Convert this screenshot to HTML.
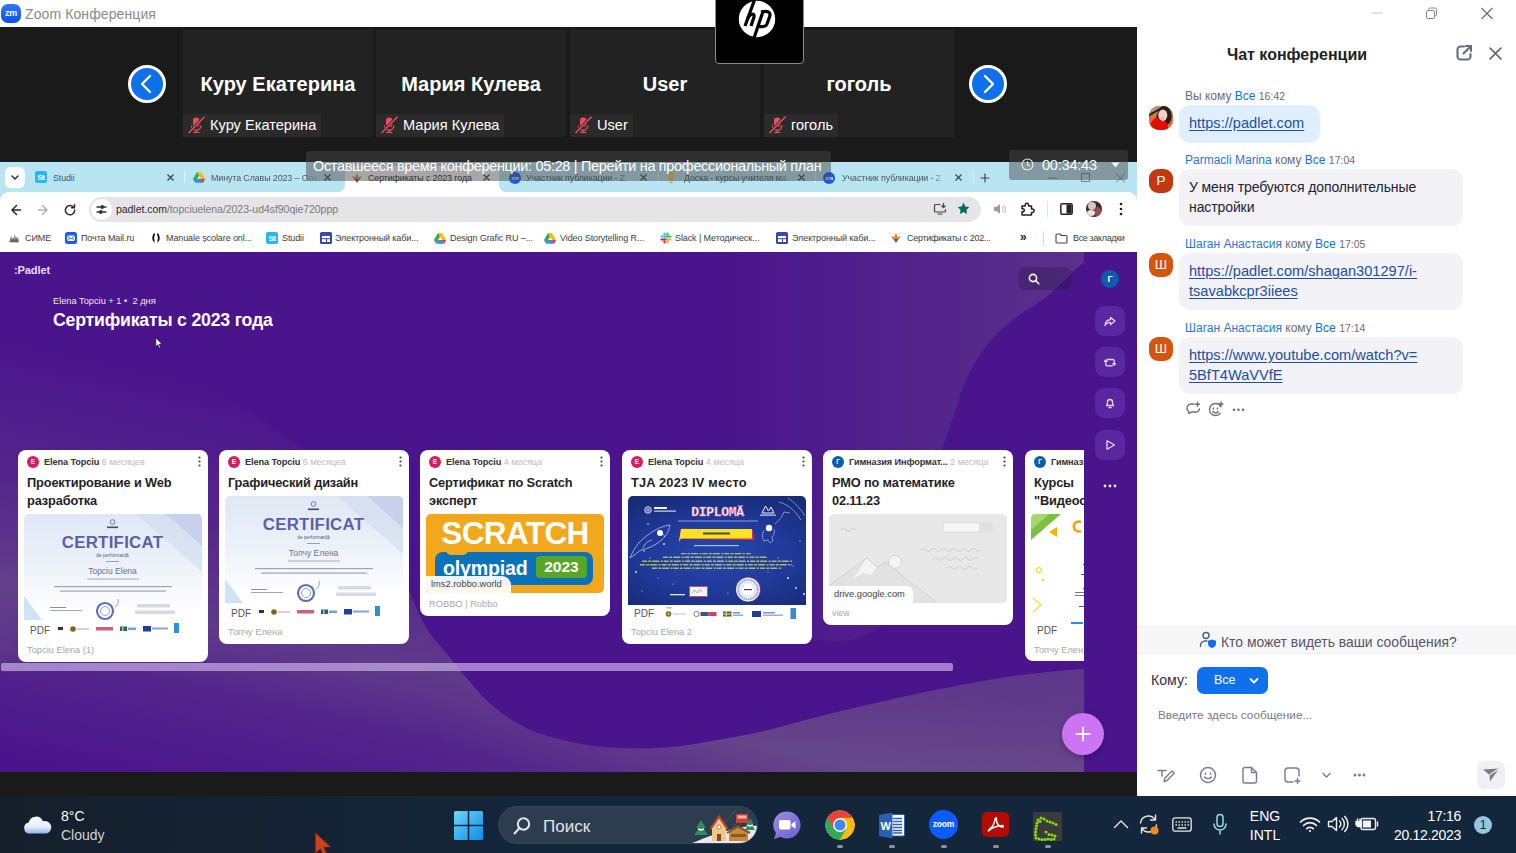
<!DOCTYPE html>
<html><head><meta charset="utf-8">
<style>
*{box-sizing:border-box;margin:0;padding:0}
html,body{width:1516px;height:853px;overflow:hidden;background:#1a1a1a;font-family:"Liberation Sans",sans-serif;}
.abs{position:absolute}
#root{position:relative;width:1516px;height:853px;overflow:hidden}
/* title bar */
#titlebar{left:0;top:0;width:1516px;height:27px;background:#fff}
#titlebar .t{left:25px;top:6px;font-size:14px;color:#8a8a8a;letter-spacing:0.1px}
/* main dark */
#main{left:0;top:27px;width:1137px;height:770px;background:#1a1a1a}
.tile{top:30px;width:190px;height:107px;background:#222222}
.tile .nm{left:0;width:190px;top:41px;text-align:center;color:#fff;font-weight:bold;font-size:20px;line-height:26px;white-space:nowrap}
.tile .lb{left:0;top:84px;height:23px;background:#2b2b2b;color:#fff;font-size:14.6px;line-height:23px;padding-left:27px;padding-right:5px;white-space:nowrap}
.tile .lb svg{position:absolute;left:4px;top:2px}
.navb{width:38px;height:38px;border-radius:50%;background:#0e71eb;border:3px solid #fff;top:65px}
/* chat */
#chat{left:1137px;top:27px;width:379px;height:769px;background:#fff}

/* chat */
#chat .hd{left:0;width:318px;top:18px;text-align:center;font-weight:bold;font-size:16px;color:#222;line-height:20px}
.mh{font-size:12px;line-height:14px;color:#6b6b7a;white-space:nowrap;left:47px}
.mh b{font-weight:normal;color:#0e71eb}
.mh i{font-style:normal;font-size:10.5px;color:#6b6b7a}
.av{left:11px;width:24px;height:24px;border-radius:9px;color:#fff;font-size:13.500px;line-height:24px;text-align:center}
.bb{left:41px;border-radius:11px;background:#f2f2f7;font-size:14.6px;line-height:20px;color:#232333;padding:8px 10px 0 10px}
.bb u{color:#1f4f9e;text-decoration:underline;text-underline-offset:2px}
/* taskbar */
#taskbar{left:0;top:796px;width:1516px;height:57px;background:#14273b}

#taskbar{background:linear-gradient(90deg,#151f2c 0%,#14263a 35%,#13273c 100%)}
.tbt{color:#fff;font-size:14px;line-height:18px;white-space:nowrap}
.ind{top:49px;width:6px;height:3px;border-radius:2px;background:#8b929b}

/* share */
#share{font-family:"Liberation Sans",sans-serif}
#tabs{left:0;top:0;width:1137px;height:42px;background:#b9e5f2}
.tabt{top:10px;font-size:8.900px;line-height:12px;color:#46575f;white-space:nowrap;overflow:hidden;letter-spacing:-.1px}
.tabx{top:11px;width:9px;height:9px}
#tool{left:0;top:30px;width:1137px;height:34px;background:#fff;border-radius:9px 9px 0 0}
#bm{left:0;top:64px;width:1137px;height:26px;background:#fff}
.bmt{top:6px;font-size:9px;line-height:12px;color:#3c4043;white-space:nowrap;letter-spacing:-.1px}
.bmi{top:6px;width:12px;height:12px}
#page{left:0;top:90px;width:1137px;height:520px;background:#4a148c;overflow:hidden}

.card{top:198px;width:190px;background:#fff;border-radius:8px;overflow:hidden}
.card .avc{left:9px;top:6px;width:12px;height:12px;border-radius:50%;color:#fff;font-size:6.500px;font-weight:bold;line-height:12px;text-align:center}
.card .au{left:26px;top:6px;font-size:9.200px;line-height:12px;color:#333;font-weight:bold;white-space:nowrap;letter-spacing:-.1px}
.card .au i{font-style:normal;font-weight:normal;color:#bdbdbd}
.card .dots{left:180px;top:6px}
.card .ti{left:9px;top:24px;font-size:12.800px;line-height:18.400px;font-weight:bold;color:#1f1f1f;white-space:nowrap;letter-spacing:-.15px}
.card .ft{left:9px;font-size:9.300px;line-height:12px;color:#a8a8a8;white-space:nowrap}
.card .im{left:6px;width:178px;border-radius:5px;overflow:hidden}
.card .pdf{left:0;bottom:0;height:16px;padding:0 8px 0 6px;background:rgba(255,255,255,.93);border-radius:0 6px 0 0;font-size:10px;line-height:17px;color:#555}
.sbtn{left:1095px;width:30px;height:30px;border-radius:9px;background:#5a27a0}
</style></head><body>
<div id="root">

<div id="main" class="abs"></div>

<!-- gallery tiles -->
<div class="abs navb" style="left:128px"><svg class="abs" style="left:0;top:0" width="32" height="32" viewBox="0 0 32 32"><path d="M19 8 L11 16 L19 24" fill="none" stroke="#fff" stroke-width="2.4" stroke-linecap="round" stroke-linejoin="round"/></svg></div>
<div class="abs navb" style="left:969px"><svg class="abs" style="left:0;top:0" width="32" height="32" viewBox="0 0 32 32"><path d="M13 8 L21 16 L13 24" fill="none" stroke="#fff" stroke-width="2.4" stroke-linecap="round" stroke-linejoin="round"/></svg></div>

<div class="abs tile" style="left:183px"><div class="abs nm">Куру Екатерина</div><div class="abs lb"><svg width="18" height="18" viewBox="0 0 18 18"><rect x="6" y="1.500" width="6.500" height="9.500" rx="3.200" fill="#e8505b"/><path d="M4.500 9.500a4.700 4.700 0 0 0 9.400 0M9.200 14v2M6.200 16.300h6" fill="none" stroke="#e8505b" stroke-width="1.300"/><path d="M2 16.500L17 1" stroke="#2c2c2c" stroke-width="3"/><path d="M1.500 17L17.500 .8" stroke="#e8505b" stroke-width="1.400"/></svg>Куру Екатерина</div></div>
<div class="abs tile" style="left:376px"><div class="abs nm">Мария Кулева</div><div class="abs lb"><svg width="18" height="18" viewBox="0 0 18 18"><rect x="6" y="1.500" width="6.500" height="9.500" rx="3.200" fill="#e8505b"/><path d="M4.500 9.500a4.700 4.700 0 0 0 9.400 0M9.200 14v2M6.200 16.300h6" fill="none" stroke="#e8505b" stroke-width="1.300"/><path d="M2 16.500L17 1" stroke="#2c2c2c" stroke-width="3"/><path d="M1.500 17L17.500 .8" stroke="#e8505b" stroke-width="1.400"/></svg>Мария Кулева</div></div>
<div class="abs tile" style="left:570px"><div class="abs nm">User</div><div class="abs lb"><svg width="18" height="18" viewBox="0 0 18 18"><rect x="6" y="1.500" width="6.500" height="9.500" rx="3.200" fill="#e8505b"/><path d="M4.500 9.500a4.700 4.700 0 0 0 9.400 0M9.200 14v2M6.200 16.300h6" fill="none" stroke="#e8505b" stroke-width="1.300"/><path d="M2 16.500L17 1" stroke="#2c2c2c" stroke-width="3"/><path d="M1.500 17L17.500 .8" stroke="#e8505b" stroke-width="1.400"/></svg>User</div></div>
<div class="abs tile" style="left:764px"><div class="abs nm">гоголь</div><div class="abs lb"><svg width="18" height="18" viewBox="0 0 18 18"><rect x="6" y="1.500" width="6.500" height="9.500" rx="3.200" fill="#e8505b"/><path d="M4.500 9.500a4.700 4.700 0 0 0 9.400 0M9.200 14v2M6.200 16.300h6" fill="none" stroke="#e8505b" stroke-width="1.300"/><path d="M2 16.500L17 1" stroke="#2c2c2c" stroke-width="3"/><path d="M1.500 17L17.500 .8" stroke="#e8505b" stroke-width="1.400"/></svg>гоголь</div></div>

<!-- SHARE -->
<div id="share" class="abs" style="left:0;top:162px;width:1137px;height:610px;overflow:hidden">
<div id="tabs" class="abs">
 <div class="abs" style="left:5px;top:5px;width:20px;height:21px;border-radius:6px;background:#fff"><svg class="abs" style="left:6px;top:8px" width="8" height="6" viewBox="0 0 8 6" fill="none" stroke="#333" stroke-width="1.500" stroke-linecap="round" stroke-linejoin="round"><path d="M1 1l3 3 3-3"/></svg></div>
 <div class="abs" style="left:35px;top:9px;width:12px;height:12px;border-radius:2px;background:#29b6f6;color:#fff;font-size:8px;font-weight:bold;line-height:13px;text-align:center;letter-spacing:-.4px">St</div><div class="abs tabt" style="left:53px">Studii</div><svg class="abs tabx" style="left:166px" viewBox="0 0 9 9" fill="none" stroke="#3a4a52" stroke-width="1.300"><path d="M1.500 1.500l6 6M7.500 1.500l-6 6"/></svg>
 <div class="abs" style="left:184px;top:9px;width:1px;height:12px;background:#e3f4f9"></div>
 <svg class="abs" style="left:193px;top:10px" width="12" height="11" viewBox="0 0 12 11"><path d="M4 0h4l4 7H8z" fill="#fbbc04"/><path d="M4 0L0 7l2 3.700L6 3.500z" fill="#34a853"/><path d="M2 10.700h8L12 7H4z" fill="#4285f4"/><path d="M8 7h4l-2 3.700z" fill="#ea4335"/></svg><div class="abs tabt" style="left:211px;width:108px;-webkit-mask-image:linear-gradient(90deg,#000 85%,transparent)">Минута Славы 2023 – Goc</div><svg class="abs tabx" style="left:323px" viewBox="0 0 9 9" fill="none" stroke="#3a4a52" stroke-width="1.300"><path d="M1.500 1.500l6 6M7.500 1.500l-6 6"/></svg>
 <div class="abs" style="left:345px;top:4px;width:154px;height:26px;background:#fff;border-radius:8px 8px 0 0"></div>
 <div class="abs" style="left:337px;top:22px;width:8px;height:8px;background:radial-gradient(circle at 0 0,transparent 8px,#fff 8.500px)"></div>
 <div class="abs" style="left:499px;top:22px;width:8px;height:8px;background:radial-gradient(circle at 100% 0,transparent 8px,#fff 8.500px)"></div>
 <svg class="abs" style="left:351px;top:10px" width="12" height="12" viewBox="0 0 12 12"><path d="M6 11L1 4l3 1.500z" fill="#e53935"/><path d="M6 11l5-7-3 1.500z" fill="#43a047"/><path d="M6 11L4 5.500 6 1l2 4.500z" fill="#fb8c00"/><path d="M6 11L4.500 7h3z" fill="#5e35b1"/></svg><div class="abs tabt" style="left:368px;color:#222">Сертификаты с 2023 года</div><svg class="abs tabx" style="left:482px" viewBox="0 0 9 9" fill="none" stroke="#3a4a52" stroke-width="1.300"><path d="M1.500 1.500l6 6M7.500 1.500l-6 6"/></svg>
 <div class="abs" style="left:509px;top:10px;width:12px;height:12px;border-radius:50%;background:#0b5cff;color:#fff;font-size:5.500px;line-height:12px;text-align:center;font-weight:bold">zm</div><div class="abs tabt" style="left:526px;width:108px;-webkit-mask-image:linear-gradient(90deg,#000 85%,transparent)">Участник публикации - Z</div><svg class="abs tabx" style="left:639px" viewBox="0 0 9 9" fill="none" stroke="#3a4a52" stroke-width="1.300"><path d="M1.500 1.500l6 6M7.500 1.500l-6 6"/></svg>
 <div class="abs" style="left:658px;top:9px;width:1px;height:12px;background:#e3f4f9"></div>
 <svg class="abs" style="left:666px;top:9px" width="10" height="13" viewBox="0 0 10 13"><circle cx="5" cy="4.500" r="3.800" fill="#f0cf6a"/><rect x="3.300" y="7.500" width="3.400" height="3.200" fill="#e8c050"/><rect x="3.600" y="11" width="2.800" height="1.200" fill="#a0a0a0"/></svg><div class="abs tabt" style="left:684px;width:110px;-webkit-mask-image:linear-gradient(90deg,#000 85%,transparent)">Доска - курсы учителя ма</div><svg class="abs tabx" style="left:797px" viewBox="0 0 9 9" fill="none" stroke="#3a4a52" stroke-width="1.300"><path d="M1.500 1.500l6 6M7.500 1.500l-6 6"/></svg>
 <div class="abs" style="left:815px;top:9px;width:1px;height:12px;background:#e3f4f9"></div>
 <div class="abs" style="left:823px;top:10px;width:12px;height:12px;border-radius:50%;background:#0b5cff;color:#fff;font-size:5.500px;line-height:12px;text-align:center;font-weight:bold">zm</div><div class="abs tabt" style="left:842px;width:104px;-webkit-mask-image:linear-gradient(90deg,#000 85%,transparent)">Участник публикации - Z</div><svg class="abs tabx" style="left:954px" viewBox="0 0 9 9" fill="none" stroke="#3a4a52" stroke-width="1.300"><path d="M1.500 1.500l6 6M7.500 1.500l-6 6"/></svg>
 <div class="abs" style="left:973px;top:9px;width:1px;height:12px;background:#e3f4f9"></div>
 <svg class="abs" style="left:980px;top:11px" width="10" height="10" viewBox="0 0 10 10" stroke="#3a4a52" stroke-width="1.200"><path d="M5 .5v9M.5 5h9"/></svg>
 <svg class="abs" style="left:1046px;top:11px" width="84" height="10" viewBox="0 0 84 10" fill="none" stroke="#6d8790" stroke-width="1"><path d="M2 5h9"/><rect x="35.500" y=".5" width="8" height="8"/><path d="M70 .5l9 9M79 .5l-9 9"/></svg>
</div>
<div id="tool" class="abs">
 <svg class="abs" style="left:11px;top:12px" width="66" height="12" viewBox="0 0 66 12" fill="none" stroke-width="1.500" stroke-linecap="round" stroke-linejoin="round"><path d="M9.500 6H1.500M5.500 1.500L1 6l4.500 4.500" stroke="#2a2a2a"/><path d="M27.500 6h8M31.500 1.500L36 6l-4.500 4.500" stroke="#b0b0b0"/><path d="M62.500 3.200A4.600 4.600 0 1 0 63.600 6" stroke="#2a2a2a"/><path d="M63.500 .8v3h-3" stroke="#2a2a2a"/></svg>
 <div class="abs" style="left:89px;top:5px;width:892px;height:25px;border-radius:13px;background:#e5e4e7"></div>
 <div class="abs" style="left:91px;top:7px;width:21px;height:21px;border-radius:50%;background:#fff"><svg class="abs" style="left:5px;top:6px" width="11" height="9" viewBox="0 0 11 9" fill="none" stroke="#333" stroke-width="1.400" stroke-linecap="round"><path d="M1 2h3.500M8 2h2M1 7h2M6.500 7H10"/><circle cx="6.200" cy="2" r="1.200" fill="#333"/><circle cx="4.800" cy="7" r="1.200" fill="#333"/></svg></div>
 <div class="abs" style="left:116px;top:11px;font-size:10.500px;line-height:13px;color:#7a7a7a;white-space:nowrap;letter-spacing:-.05px"><span style="color:#2a2a2a">padlet.com</span>/topciuelena/2023-ud4sf90qie720ppp</div>
 <svg class="abs" style="left:933px;top:11px" width="14" height="12" viewBox="0 0 14 12" fill="none" stroke="#444" stroke-width="1.200" stroke-linecap="round" stroke-linejoin="round"><path d="M7 1.500H2.500a1 1 0 0 0-1 1V8a1 1 0 0 0 1 1h9a1 1 0 0 0 1-1V6.500M5 11h4"/><path d="M10.500 .5v4M8.800 3l1.700 1.700L12.200 3"/></svg>
 <svg class="abs" style="left:957px;top:10px" width="13" height="13" viewBox="0 0 13 13"><path d="M6.500 .8l1.800 3.700 4 .6-2.900 2.800.7 4-3.600-1.900-3.600 1.900.7-4L.7 5.100l4-.6z" fill="#00695c"/></svg>
 <svg class="abs" style="left:993px;top:11px" width="14" height="12" viewBox="0 0 14 12"><path d="M1 4h2.500L7 1v10L3.500 8H1z" fill="#9a9a9a"/><path d="M9 3.500a3.500 3.500 0 0 1 0 5M10.800 1.800a6 6 0 0 1 0 8.400" fill="none" stroke="#c8c8c8" stroke-width="1.200"/></svg>
 <svg class="abs" style="left:1020px;top:10px" width="15" height="14" viewBox="0 0 15 14" fill="none" stroke="#222" stroke-width="1.500" stroke-linejoin="round"><path d="M2 4h3.200V3a1.700 1.700 0 0 1 3.400 0v1H11.500v3h1a1.700 1.700 0 0 1 0 3.400h-1V13H2V9.800h.8a1.500 1.500 0 0 0 0-3H2z"/></svg>
 <div class="abs" style="left:1047px;top:9px;width:1px;height:16px;background:#cfe8f0"></div>
 <svg class="abs" style="left:1060px;top:11px" width="13" height="12" viewBox="0 0 13 12"><rect x=".8" y=".8" width="11.400" height="10.400" rx="1.500" fill="none" stroke="#222" stroke-width="1.500"/><rect x="6.500" y="1.500" width="5" height="9" fill="#222"/></svg>
 <div class="abs" style="left:1086px;top:9px;width:16px;height:16px;border-radius:50%;background:#3a2a30;overflow:hidden"><div class="abs" style="left:2px;top:1px;width:8px;height:8px;border-radius:50%;background:#d9c7c4"></div><div class="abs" style="left:8px;top:6px;width:7px;height:9px;border-radius:50%;background:#9c4a52"></div><div class="abs" style="left:1px;top:9px;width:8px;height:6px;border-radius:50%;background:#e8e2e0"></div></div>
 <svg class="abs" style="left:1119px;top:10px" width="4" height="14" viewBox="0 0 4 14" fill="#222"><circle cx="2" cy="2" r="1.300"/><circle cx="2" cy="7" r="1.300"/><circle cx="2" cy="12" r="1.300"/></svg>
</div>
<div id="bm" class="abs">
 <svg class="abs bmi" style="left:8px" viewBox="0 0 12 12"><path d="M1 10L3 4l2 4 2-6 1 6 2-3 1 5z" fill="#8a8a8a"/><path d="M2 10.500l3-5 1.500 3 2-4 2 6z" fill="#4a4a4a" opacity=".6"/></svg><div class="abs bmt" style="left:25px">СИМЕ</div>
 <svg class="abs bmi" style="left:65px" viewBox="0 0 12 12"><rect width="12" height="12" rx="2.500" fill="#1a5cff"/><rect x="2.200" y="3.500" width="7.600" height="5.500" rx=".8" fill="#fff"/><path d="M2.500 4l3.500 3 3.500-3M2.500 8.700l2.500-2.500M9.500 8.700L7 6.200" fill="none" stroke="#1a5cff" stroke-width=".9"/></svg><div class="abs bmt" style="left:81px">Почта Mail.ru</div>
 <svg class="abs bmi" style="left:150px" viewBox="0 0 12 12"><path d="M4.500 1C2.500 2.500 2 5 2.500 8l2 3V8.500C4 6.500 4 4 5.200 2zM7.500 1C9.500 2.500 10 5 9.500 8l-2 3V8.500C8 6.500 8 4 6.800 2z" fill="#111"/></svg><div class="abs bmt" style="left:166px">Manuale școlare onl...</div>
 <div class="abs" style="left:266px;top:6px;width:12px;height:12px;border-radius:2px;background:#29b6f6;color:#fff;font-size:8px;font-weight:bold;line-height:13px;text-align:center;letter-spacing:-.4px">St</div><div class="abs bmt" style="left:282px">Studii</div>
 <svg class="abs" style="left:320px;top:6px" width="12" height="12" viewBox="0 0 12 12"><rect width="12" height="12" rx="1.500" fill="#3949ab"/><rect x="2" y="4" width="8" height="6" fill="#fff"/><rect x="2" y="6.200" width="8" height="1" fill="#3949ab"/><rect x="6" y="6.200" width="1" height="3.800" fill="#3949ab"/></svg><div class="abs bmt" style="left:335px">Электронный каби...</div>
 <svg class="abs" style="left:434px;top:6.5px" width="12" height="11" viewBox="0 0 12 11"><path d="M4 0h4l4 7H8z" fill="#fbbc04"/><path d="M4 0L0 7l2 3.700L6 3.500z" fill="#34a853"/><path d="M2 10.700h8L12 7H4z" fill="#4285f4"/><path d="M8 7h4l-2 3.700z" fill="#ea4335"/></svg><div class="abs bmt" style="left:450px">Design Grafic RU –...</div>
 <svg class="abs" style="left:544px;top:6.5px" width="12" height="11" viewBox="0 0 12 11"><path d="M4 0h4l4 7H8z" fill="#fbbc04"/><path d="M4 0L0 7l2 3.700L6 3.500z" fill="#34a853"/><path d="M2 10.700h8L12 7H4z" fill="#4285f4"/><path d="M8 7h4l-2 3.700z" fill="#ea4335"/></svg><div class="abs bmt" style="left:560px">Video Storytelling R...</div>
 <svg class="abs bmi" style="left:660px" viewBox="0 0 12 12" stroke-width="2.200" stroke-linecap="round"><path d="M4.500 1.500v4" stroke="#36c5f0"/><path d="M1.500 4.500h1" stroke="#36c5f0"/><path d="M10.500 4.500h-4" stroke="#2eb67d"/><path d="M7.500 1.500v1" stroke="#2eb67d"/><path d="M7.500 10.500v-4" stroke="#ecb22e"/><path d="M10.500 7.500h-1" stroke="#ecb22e"/><path d="M1.500 7.500h4" stroke="#e01e5a"/><path d="M4.500 10.500v-1" stroke="#e01e5a"/></svg><div class="abs bmt" style="left:675px">Slack | Методическ...</div>
 <svg class="abs" style="left:776px;top:6px" width="12" height="12" viewBox="0 0 12 12"><rect width="12" height="12" rx="1.500" fill="#3949ab"/><rect x="2" y="4" width="8" height="6" fill="#fff"/><rect x="2" y="6.200" width="8" height="1" fill="#3949ab"/><rect x="6" y="6.200" width="1" height="3.800" fill="#3949ab"/></svg><div class="abs bmt" style="left:792px">Электронный каби...</div>
 <svg class="abs" style="left:890px;top:6px" width="12" height="12" viewBox="0 0 12 12"><path d="M6 11L1 4l3 1.500z" fill="#e53935"/><path d="M6 11l5-7-3 1.500z" fill="#43a047"/><path d="M6 11L4 5.500 6 1l2 4.500z" fill="#fb8c00"/><path d="M6 11L4.500 7h3z" fill="#5e35b1"/></svg><div class="abs bmt" style="left:907px;letter-spacing:-.3px">Сертификаты с 202...</div>
 <div class="abs bmt" style="left:1020px;font-size:12px;top:5px;color:#222;font-weight:bold">»</div>
 <div class="abs" style="left:1043px;top:5px;width:1px;height:15px;background:#bfe3ee"></div>
 <svg class="abs" style="left:1055px;top:7px" width="13" height="11" viewBox="0 0 13 11" fill="none" stroke="#444" stroke-width="1.100" stroke-linejoin="round"><path d="M1 2a1 1 0 0 1 1-1h3l1.500 1.500H11a1 1 0 0 1 1 1V9a1 1 0 0 1-1 1H2a1 1 0 0 1-1-1z"/></svg><div class="abs bmt" style="left:1073px;letter-spacing:-.35px">Все закладки</div>
</div>
<div id="page" class="abs">
<svg class="abs" style="left:0;top:0" width="1137" height="520" viewBox="0 0 1137 520">
<defs>
<linearGradient id="g1" gradientUnits="userSpaceOnUse" x1="720" y1="0" x2="1084" y2="0"><stop offset="0" stop-color="#b4d484" stop-opacity="0"/><stop offset=".45" stop-color="#b4d484" stop-opacity=".065"/><stop offset="1" stop-color="#b4d484" stop-opacity=".15"/></linearGradient>
<linearGradient id="g2" gradientUnits="userSpaceOnUse" x1="100" y1="50" x2="-12" y2="558"><stop offset=".1" stop-color="#b4d484" stop-opacity="0"/><stop offset=".36" stop-color="#b4d484" stop-opacity=".09"/><stop offset=".56" stop-color="#b4d484" stop-opacity=".2"/><stop offset=".7" stop-color="#b4d484" stop-opacity=".08"/><stop offset=".9" stop-color="#b4d484" stop-opacity="0"/></linearGradient>
<linearGradient id="g3" gradientUnits="userSpaceOnUse" x1="430" y1="0" x2="1084" y2="0"><stop offset="0" stop-color="#b4d484" stop-opacity="0"/><stop offset="1" stop-color="#b4d484" stop-opacity=".13"/></linearGradient>
<radialGradient id="g4" gradientUnits="userSpaceOnUse" cx="0" cy="385" r="60" gradientTransform="translate(0 385) scale(1 1.600) translate(0 -385)"><stop offset="0" stop-color="#b4d484" stop-opacity=".1"/><stop offset="1" stop-color="#b4d484" stop-opacity="0"/></radialGradient>
</defs>
<rect width="1137" height="520" fill="#4a148c"/>
<path d="M720 0H1100V-2C1085 8 1070 22 1057 36 1044 48 1032 54 1019 63 1002 76 990 88 981 101 969 119 962 135 958 151 951 172 946 185 942 197 932 250 920 320 885 370 865 388 840 394 813 386 770 380 735 330 725 200 722 100 720 50 720 0z" fill="url(#g1)"/>
<path id="lw" d="M0 60C150 90 300 170 370 270 390 300 400 320 409 338 414 350 418 360 423 370 428 380 434 387 440 393.500 447 402 454 411 461 419 469 429 478 440 487 449 497 458 508 466 519 472 529 478 540 482 551 485 565 489 579 492 593 494 614 496 636 497 657 496 672 495 686 494 700 491 718 488 735 485 753 481.500 770 478 788 473 805.500 468 823 464 840 459 858 455 876 451 893 447 911 443 929 439 946 436 964 432.600 982 429 999 426 1017 423.400 1040 421 1062 418 1084 417V520H0z" fill="url(#g2)"/>
<path d="M430 520V400C445 410 454 411 461 419 469 429 478 440 487 449 497 458 508 466 519 472 529 478 540 482 551 485 565 489 579 492 593 494 614 496 636 497 657 496 672 495 686 494 700 491 718 488 735 485 753 481.500 770 478 788 473 805.500 468 823 464 840 459 858 455 876 451 893 447 911 443 929 439 946 436 964 432.600 982 429 999 426 1017 423.400 1040 421 1062 418 1084 417V520z" fill="url(#g3)"/>
<rect x="0" y="280" width="70" height="140" fill="url(#g4)"/>
</svg>

<div class="abs" style="left:14px;top:12px;font-size:11px;line-height:13px;color:#e9def5;font-weight:bold;letter-spacing:-.1px">:Padlet</div>
<div class="abs" style="left:53px;top:44px;font-size:9.250px;line-height:11px;color:#efe6fa;white-space:nowrap">Elena Topciu + 1 • &nbsp;2 дня</div>
<div class="abs" style="left:53px;top:57px;font-size:17.700px;line-height:22px;color:#fff;font-weight:bold;white-space:nowrap;letter-spacing:-.2px">Сертификаты с 2023 года</div>
<svg class="abs" style="left:155px;top:85px" width="8" height="12" viewBox="0 0 8 12"><path d="M.8 .8v9l2.100-2 1.500 3.400 1.300-.6-1.500-3.300h2.800z" fill="#fff" stroke="#111" stroke-width=".7"/></svg>

<!-- cards -->
<div class="abs card" style="left:18px;height:212px">
<div class="abs avc" style="background:#d81b60">E</div><div class="abs au">Elena Topciu <i>6 месяцев</i></div><svg class="abs dots" width="3" height="11" viewBox="0 0 3 11" fill="#444"><circle cx="1.500" cy="1.500" r="1.100"/><circle cx="1.500" cy="5.500" r="1.100"/><circle cx="1.500" cy="9.500" r="1.100"/></svg>
<div class="abs ti">Проектирование и Web<br>разработка</div>
<div class="abs im" style="top:64px;height:124px;background:linear-gradient(180deg,#dfe8f5 0%,#eef3fa 45%,#ffffff 80%)">
<svg class="abs" style="left:0;top:0" width="178" height="124" viewBox="0 0 178 124"><path d="M112 0L178 58V0z" fill="#cdd8ee" opacity=".55"/><path d="M142 0L178 32V0z" fill="#bfc4e6" opacity=".6"/><path d="M0 82L18 106H0z" fill="#cfe3f5"/>
<circle cx="88.500" cy="8" r="2.300" fill="none" stroke="#5b5ea6" stroke-width=".8"/><rect x="83" y="12.500" width="11" height="1.600" fill="#4a4a6a"/>
<text x="88.500" y="34" font-family="Liberation Sans" font-weight="bold" font-size="16.800" fill="#5c5fa8" text-anchor="middle" letter-spacing=".3">CERTIFICAT</text>
<text x="88.500" y="42.500" font-family="Liberation Sans" font-size="4.800" fill="#55597a" text-anchor="middle">de performanță</text>
<rect x="82" y="47" width="13" height="1" fill="#9a9fb8"/>
<text x="88.500" y="60" font-family="Liberation Sans" font-size="8.500" fill="#6a6f95" text-anchor="middle">Topciu Elena</text>
<rect x="63" y="64.500" width="52" height="1" fill="#a8adc2"/>
<rect x="30" y="72" width="118" height="1.200" fill="#9da2b8"/><rect x="36" y="76.500" width="106" height="1.200" fill="#9da2b8"/>
<circle cx="81" cy="97" r="8" fill="none" stroke="#5a6fb8" stroke-width="2.200"/><circle cx="81" cy="97" r="4.500" fill="none" stroke="#8fa0d6" stroke-width="1"/><path d="M91 93c3-2 4-5 3-8" fill="none" stroke="#7a86c0" stroke-width=".8"/>
<rect x="26" y="93" width="16" height="1" fill="#8a8fa8"/><rect x="26" y="96" width="32" height="1" fill="#a0a5ba"/>
<rect x="113" y="90" width="33" height="3.500" rx="1" fill="#d5dbe6"/><rect x="111" y="96.500" width="40" height="3.500" rx="1" fill="#d5dbe6"/>
<g transform="translate(0,-1)"><rect x="32" y="114" width="7" height="3" fill="#333"/><circle cx="49" cy="116" r="2.800" fill="#7a6a20"/><rect x="53" y="115.500" width="12" height="1" fill="#b0a0c0"/><rect x="72" y="114" width="17" height="3.500" fill="#c03a5a" opacity=".8"/><rect x="96" y="113.500" width="7" height="4.500" fill="#1f5fa8"/><rect x="98" y="113.500" width="1.500" height="4.500" fill="#f2c400"/><rect x="104" y="114.500" width="8" height="2.500" fill="#3a7ac0" opacity=".7"/><rect x="119" y="113" width="8" height="5.500" fill="#1f3f9a"/><rect x="128" y="114.500" width="16" height="2" fill="#5a7ac8" opacity=".7"/><rect x="150" y="110" width="5" height="10" fill="#2f8fd8"/></g>
</svg><div class="abs pdf">PDF</div></div>
<div class="abs ft" style="top:194px">Topciu Elena (1)</div></div>

<div class="abs card" style="left:219px;height:194px">
<div class="abs avc" style="background:#d81b60">E</div><div class="abs au">Elena Topciu <i>6 месяцев</i></div><svg class="abs dots" width="3" height="11" viewBox="0 0 3 11" fill="#444"><circle cx="1.500" cy="1.500" r="1.100"/><circle cx="1.500" cy="5.500" r="1.100"/><circle cx="1.500" cy="9.500" r="1.100"/></svg>
<div class="abs ti">Графический дизайн</div>
<div class="abs im" style="top:46px;height:125px;background:linear-gradient(180deg,#dfe8f5 0%,#eef3fa 45%,#ffffff 80%)">
<svg class="abs" style="left:0;top:0" width="178" height="125" viewBox="0 0 178 125"><path d="M112 0L178 58V0z" fill="#cdd8ee" opacity=".55"/><path d="M142 0L178 32V0z" fill="#bfc4e6" opacity=".6"/><path d="M0 83L18 107H0z" fill="#cfe3f5"/>
<circle cx="88.500" cy="8" r="2.300" fill="none" stroke="#5b5ea6" stroke-width=".8"/><rect x="83" y="12.500" width="11" height="1.600" fill="#4a4a6a"/>
<text x="88.500" y="34" font-family="Liberation Sans" font-weight="bold" font-size="16.800" fill="#5c5fa8" text-anchor="middle" letter-spacing=".3">CERTIFICAT</text>
<text x="88.500" y="42.500" font-family="Liberation Sans" font-size="4.800" fill="#55597a" text-anchor="middle">de performanță</text>
<rect x="82" y="47" width="13" height="1" fill="#9a9fb8"/>
<text x="88.500" y="60" font-family="Liberation Sans" font-size="8.500" fill="#6a6f95" text-anchor="middle">Топчу Елена</text>
<rect x="63" y="64.500" width="52" height="1" fill="#a8adc2"/>
<rect x="30" y="72" width="118" height="1.200" fill="#9da2b8"/><rect x="36" y="76.500" width="106" height="1.200" fill="#9da2b8"/>
<circle cx="81" cy="97" r="8" fill="none" stroke="#5a6fb8" stroke-width="2.200"/><circle cx="81" cy="97" r="4.500" fill="none" stroke="#8fa0d6" stroke-width="1"/><path d="M91 93c3-2 4-5 3-8" fill="none" stroke="#7a86c0" stroke-width=".8"/>
<rect x="26" y="93" width="16" height="1" fill="#8a8fa8"/><rect x="26" y="96" width="32" height="1" fill="#a0a5ba"/>
<rect x="113" y="90" width="33" height="3.500" rx="1" fill="#d5dbe6"/><rect x="111" y="96.500" width="40" height="3.500" rx="1" fill="#d5dbe6"/>
<g transform="translate(0,0)"><rect x="32" y="114" width="7" height="3" fill="#333"/><circle cx="49" cy="116" r="2.800" fill="#7a6a20"/><rect x="53" y="115.500" width="12" height="1" fill="#b0a0c0"/><rect x="72" y="114" width="17" height="3.500" fill="#c03a5a" opacity=".8"/><rect x="96" y="113.500" width="7" height="4.500" fill="#1f5fa8"/><rect x="98" y="113.500" width="1.500" height="4.500" fill="#f2c400"/><rect x="104" y="114.500" width="8" height="2.500" fill="#3a7ac0" opacity=".7"/><rect x="119" y="113" width="8" height="5.500" fill="#1f3f9a"/><rect x="128" y="114.500" width="16" height="2" fill="#5a7ac8" opacity=".7"/><rect x="150" y="110" width="5" height="10" fill="#2f8fd8"/></g>
</svg><div class="abs pdf">PDF</div></div>
<div class="abs ft" style="top:176px">Топчу Елена</div></div>

<div class="abs card" style="left:420px;height:166px">
<div class="abs avc" style="background:#d81b60">E</div><div class="abs au">Elena Topciu <i>4 месяца</i></div><svg class="abs dots" width="3" height="11" viewBox="0 0 3 11" fill="#444"><circle cx="1.500" cy="1.500" r="1.100"/><circle cx="1.500" cy="5.500" r="1.100"/><circle cx="1.500" cy="9.500" r="1.100"/></svg>
<div class="abs ti">Сертификат по Scratch<br>эксперт</div>
<div class="abs im" style="top:64px;height:79px;background:#f1a81d">
<div class="abs" style="left:0;top:2px;width:178px;text-align:center;font-size:31.500px;line-height:34px;font-weight:bold;color:#fff;letter-spacing:-.6px">SCRATCH</div>
<div class="abs" style="left:9px;top:38px;width:158px;height:33px;border-radius:8px;background:#0b72b9"></div><div class="abs" style="left:20px;top:34px;width:22px;height:7px;border-radius:0 0 5px 5px;background:#f1a81d"></div>
<div class="abs" style="left:17px;top:42px;font-size:19.600px;line-height:24px;font-weight:bold;color:#fff;letter-spacing:-.2px">olympiad</div>
<div class="abs" style="left:110px;top:42px;width:51px;height:22px;border-radius:4px;background:#5aa528;color:#fff;font-weight:bold;font-size:15.500px;line-height:22px;text-align:center">2023</div>
<div class="abs pdf" style="height:17px;padding:0 9px 0 5px;border-radius:0 9px 0 0;font-size:9.300px;color:#444;background:rgba(255,255,255,.93)">lms2.robbo.world</div></div>
<div class="abs ft" style="top:148px">ROBBO | Robbo</div></div>

<div class="abs card" style="left:622px;height:194px">
<div class="abs avc" style="background:#d81b60">E</div><div class="abs au">Elena Topciu <i>4 месяца</i></div><svg class="abs dots" width="3" height="11" viewBox="0 0 3 11" fill="#444"><circle cx="1.500" cy="1.500" r="1.100"/><circle cx="1.500" cy="5.500" r="1.100"/><circle cx="1.500" cy="9.500" r="1.100"/></svg>
<div class="abs ti" style="letter-spacing:.2px">TJA 2023 IV место</div>
<div class="abs im" style="top:46px;height:125px;background:#fff">
<div class="abs" style="left:0;top:0;width:178px;height:109px;background:radial-gradient(ellipse 75% 60% at 50% 55%,#2747aa 0%,#20399a 55%,#182c78 100%)"></div>
<svg class="abs" style="left:0;top:0" width="178" height="125" viewBox="0 0 178 125">
<g fill="#fff" opacity=".85"><circle cx="20" cy="28" r=".8"/><circle cx="36" cy="48" r="1"/><circle cx="16" cy="55" r=".8"/><circle cx="8" cy="76" r="1"/><circle cx="22" cy="62" r=".6"/><circle cx="160" cy="82" r="1"/><circle cx="168" cy="92" r=".9"/><circle cx="176" cy="98" r="1"/><circle cx="150" cy="62" r=".6"/><circle cx="14" cy="95" r=".6"/><circle cx="100" cy="97" r=".6"/><circle cx="60" cy="64" r=".5"/><circle cx="165" cy="70" r=".6"/><circle cx="172" cy="45" r=".6"/><circle cx="45" cy="88" r=".5"/><circle cx="30" cy="82" r=".5"/><circle cx="140" cy="76" r=".5"/></g>
<circle cx="20" cy="14" r="3.300" fill="none" stroke="#e8ecff" stroke-width=".9"/><path d="M18 12l4 4M22 12l-4 4M20 11v6M17 14h6" stroke="#e8ecff" stroke-width=".5"/><rect x="26" y="11" width="13" height="2" fill="#f2f4ff"/><rect x="26" y="14.500" width="22" height="1.200" fill="#d0d8f4"/>
<path d="M134 17l3.500-7 3 5 2.500-4 3 6z" fill="none" stroke="#f2f4ff" stroke-width="1"/><rect x="132" y="18.500" width="16" height="1.200" fill="#d0d8f4"/>
<text x="89.500" y="19.500" font-family="Liberation Mono" font-weight="bold" font-size="13" fill="#fff0f4" text-anchor="middle" stroke="#e8709a" stroke-width=".4" letter-spacing="-.3">DIPLOMĂ</text>
<rect x="50" y="24.500" width="80" height="1" fill="#a8b6e4" opacity=".8"/>
<path d="M2 62c4-10 10-18 18-23 6-5 14-9 22-10-1 7-5 13-11 17-5 4-12 7-18 8zM24 44c-4 1-8 4-9 8M32 36c2 1 4 3 5 5" fill="none" stroke="#c6d0f4" stroke-width=".8" opacity=".9"/><circle cx="32" cy="37" r="3" fill="#fff"/>
<circle cx="141" cy="32" r="3.200" fill="#fff"/><path d="M136 34c-2 4-2 8 0 11l4-1 2 3 3-2-1-4c2-2 3-5 2-8M147 28c4-3 7-7 9-12l6 1M151 6c8 2 16 8 22 18M160 2c6 4 12 10 17 18" fill="none" stroke="#c6d0f4" stroke-width=".7" opacity=".85"/>
<path d="M53 32.500l72 1.500 1 10-73-1-2.500 4z" fill="#d8304a"/><path d="M53 33h71v9.500H53l-2 3z" fill="#f7e322"/><rect x="75" y="36.500" width="27" height="2" fill="#4a4a3a"/>
<rect x="66" y="49" width="45" height="1.200" fill="#b8c6f2" opacity=".9"/>
<g stroke="#c9d85e" opacity=".8" stroke-width="1.400" stroke-dasharray="5 1.200 3 1 7 1.400 2 1"><path d="M53 57.600h71M35 61.200h104M14 65.200h150M12 68.700h152M24 72.200h130"/></g>
<rect x="42" y="98" width="15" height="1.300" fill="#dfe6ff"/><rect x="61.500" y="90.500" width="18" height="10" fill="#f6f6fa" stroke="#d83a5a" stroke-width=".8"/><path d="M64 97.500c2-3 3-4 4-2s2 1 3-1 2-1 3 2" fill="none" stroke="#667" stroke-width=".6"/>
<circle cx="120.500" cy="93.500" r="12.300" fill="#c8305a" opacity=".7"/><circle cx="120" cy="93.500" r="12" fill="#e4e9f6"/><circle cx="120" cy="93.500" r="9.800" fill="none" stroke="#8fa0d0" stroke-width="1.600" stroke-dasharray="1.500 .8"/><circle cx="120" cy="93.500" r="6" fill="#fff"/><rect x="116" y="93" width="8" height="1.200" fill="#445"/>
<g><rect x="38" y="111.500" width="6" height=".8" fill="#888"/><circle cx="40.500" cy="118" r="2.800" fill="#7a6a20"/><circle cx="40.500" cy="118" r="1.200" fill="#d8c040"/><rect x="45" y="117.500" width="13" height="1" fill="#c8bcd0"/><circle cx="68.500" cy="118" r="2.600" fill="none" stroke="#445" stroke-width=".7"/><rect x="72.500" y="116" width="8" height="4" fill="#24408a" opacity=".9"/><rect x="80.500" y="116" width="8" height="4" fill="#c8304a" opacity=".9"/><rect x="95" y="115.500" width="8.500" height="5" fill="#1f5fa8"/><rect x="97.500" y="115.500" width="1.600" height="5" fill="#f2c400"/><rect x="95" y="117.300" width="8.500" height="1.400" fill="#f2c400"/><rect x="105" y="116" width="7" height="1.500" fill="#3a7ac0" opacity=".8"/><rect x="105" y="118.500" width="10" height="1.500" fill="#3a7ac0" opacity=".6"/><rect x="124" y="115" width="9" height="6" fill="#1f3f9a"/><rect x="135" y="116" width="12" height="1.500" fill="#5a7ac8" opacity=".8"/><rect x="135" y="118.500" width="20" height="1.500" fill="#5a7ac8" opacity=".6"/><rect x="162.500" y="112" width="5.500" height="11" fill="#2f8fd8"/></g>
</svg><div class="abs pdf">PDF</div></div>
<div class="abs ft" style="top:176px">Topciu Elena 2</div></div>

<div class="abs card" style="left:823px;height:175px">
<div class="abs avc" style="background:#0d5cab">Г</div><div class="abs au">Гимназия Информат... <i>2 месяца</i></div><svg class="abs dots" width="3" height="11" viewBox="0 0 3 11" fill="#444"><circle cx="1.500" cy="1.500" r="1.100"/><circle cx="1.500" cy="5.500" r="1.100"/><circle cx="1.500" cy="9.500" r="1.100"/></svg>
<div class="abs ti">РМО по математике<br>02.11.23</div>
<div class="abs im" style="top:64px;height:89px;background:#e8e8e8">
<svg class="abs" style="left:0;top:0" width="178" height="89" viewBox="0 0 178 89"><rect x="114" y="9" width="50" height="9" rx="1.500" fill="#f7f7f7" stroke="#d6d6d6" stroke-width=".8"/><rect x="150" y="9" width="14" height="9" fill="#e0e0e0"/><path d="M12 16c2-2 3-2 5 0s3 2 5 0 3-2 5 0" fill="none" stroke="#d2d2d2" stroke-width="1.200"/><g fill="none" stroke="#d4d4d4" stroke-width="1.200"><path d="M92 36c2-2 3-2 5 0s3 2 5 0 3-2 5 0 3 2 5 0 3-2 5 0 3 2 5 0 3-2 5 0 3 2 5 0 3-2 5 0 3 2 5 0 3-2 5 0 3 2 5 0"/><path d="M104 45c2-2 3-2 5 0s3 2 5 0 3-2 5 0 3 2 5 0 3-2 5 0 3 2 5 0 3-2 5 0 3 2 5 0 3-2 5 0"/><path d="M118 54c2-2 3-2 5 0s3 2 5 0 3-2 5 0 3 2 5 0 3-2 5 0 3 2 5 0"/></g><circle cx="66" cy="48" r="6.500" fill="#f4f4f4" stroke="#d4d4d4" stroke-width="1"/><path d="M0 70L38 44l10 9 8-5 50 41H0z" fill="#e2e2e2"/><path d="M38 44l10 9-6 8-8-2-10 6z" fill="#f4f4f4"/><path d="M0 72L38 44l10 9 8-5 52 41" fill="none" stroke="#d0d0d0" stroke-width="1"/></svg>
<div class="abs pdf" style="height:17px;padding:0 8px 0 5px;font-size:9.300px;color:#444">drive.google.com</div></div>
<div class="abs ft" style="top:157px;font-size:8.800px">view</div></div>

<div class="abs card" style="left:1025px;height:211px;width:70px;border-radius:8px 0 0 8px">
<div class="abs avc" style="background:#0d5cab">Г</div><div class="abs au">Гимназия Информат</div>
<div class="abs ti">Курсы<br>"Видеосъемка</div>
<div class="abs im" style="top:64px;height:124px;background:#fff;width:70px;border-radius:5px 0 0 5px">
<svg class="abs" style="left:0;top:0" width="70" height="124" viewBox="0 0 70 124"><path d="M0 0h30L0 26z" fill="#7cc043"/><path d="M0 0h18L0 16z" fill="#a6d86a"/><path d="M26 13l-8 5 8 5z" fill="#f7b400"/><path d="M50 8a5 5 0 1 0 0 9" fill="none" stroke="#f7a000" stroke-width="2.500"/><circle cx="8" cy="56" r="2.500" fill="none" stroke="#e8dc30" stroke-width="1.200"/><circle cx="12" cy="66" r="1.500" fill="#d8e84a"/><path d="M2 84l8 7-8 7" fill="none" stroke="#f0e040" stroke-width="1.400"/><g fill="#555"><rect x="52" y="50" width="8" height="1"/><rect x="50" y="60" width="10" height="1"/><rect x="52" y="74" width="8" height="1.200"/><rect x="44" y="78" width="16" height=".8"/><rect x="44" y="81" width="16" height=".8"/><rect x="48" y="92" width="12" height="1"/></g><rect x="40" y="108" width="12" height="2" fill="#2f8fd8"/></svg>
<div class="abs pdf">PDF</div></div>
<div class="abs ft" style="top:194px">Топчу Елена</div></div>

<div class="abs" style="left:1px;top:411px;width:952px;height:8px;border-radius:2px;background:rgba(214,190,240,.62)"></div>
<div class="abs" style="left:1084px;top:0;width:53px;height:520px;background:#4a148c"></div>
<div class="abs" style="left:1018px;top:15px;width:54px;height:23px;border-radius:7px;background:rgba(45,25,75,.36)"><svg class="abs" style="left:10px;top:6px" width="12" height="12" viewBox="0 0 12 12" fill="none" stroke="#fff" stroke-width="1.600" stroke-linecap="round"><circle cx="5" cy="5" r="3.600"/><path d="M7.800 7.800l3 3"/></svg></div>
<div class="abs" style="left:1101px;top:18px;width:18px;height:18px;border-radius:50%;background:#0d5cab;color:#fff;font-size:9px;font-weight:bold;line-height:18px;text-align:center">Г</div>
<div class="abs sbtn" style="top:54px"><svg class="abs" style="left:9px;top:10px" width="12" height="11" viewBox="0 0 12 11" fill="none" stroke="#e6d8f5" stroke-width="1.300" stroke-linejoin="round" stroke-linecap="round"><path d="M6.500 1.500L11 5 6.500 8.500V6.300C3.500 6.300 2 7.500 1 9.500 1.300 6 3 4 6.500 3.700z"/></svg></div>
<div class="abs sbtn" style="top:95px"><svg class="abs" style="left:9px;top:10px" width="12" height="11" viewBox="0 0 12 11" fill="none" stroke="#e6d8f5" stroke-width="1.300" stroke-linejoin="round" stroke-linecap="round"><path d="M3.500 2.500H9a1.200 1.200 0 0 1 1.200 1.200V7.500M8.500 8.800H3a1.200 1.200 0 0 1-1.200-1.200V3.500"/><path d="M.6 4.300l1.200-1.300 1.300 1.300M11.400 6.800l-1.200 1.300-1.300-1.300"/></svg></div>
<div class="abs sbtn" style="top:136px"><svg class="abs" style="left:9px;top:9px" width="12" height="12" viewBox="0 0 12 12" fill="none" stroke="#e6d8f5" stroke-width="1.300" stroke-linejoin="round" stroke-linecap="round"><path d="M2.500 8.500c1-1 1-2 1-3.500a2.500 2.500 0 0 1 5 0c0 1.500 0 2.500 1 3.500z"/><path d="M5 10.500h2"/></svg></div>
<div class="abs sbtn" style="top:178px"><svg class="abs" style="left:10px;top:9px" width="11" height="12" viewBox="0 0 11 12" fill="none" stroke="#e6d8f5" stroke-width="1.300" stroke-linejoin="round"><path d="M2 1.800l7.500 4.200L2 10.200z"/></svg></div>
<svg class="abs" style="left:1103px;top:232px" width="14" height="4" viewBox="0 0 14 4" fill="#efe6fa"><circle cx="2" cy="2" r="1.400"/><circle cx="7" cy="2" r="1.400"/><circle cx="12" cy="2" r="1.400"/></svg>

<div class="abs" style="left:1062px;top:461px;width:42px;height:42px;border-radius:50%;background:#cc74f5;box-shadow:0 2px 6px rgba(0,0,0,.25);z-index:3"><svg class="abs" style="left:13px;top:13px" width="16" height="16" viewBox="0 0 16 16" stroke="#fff" stroke-width="1.800" stroke-linecap="round"><path d="M8 1.500v13M1.500 8h13"/></svg></div>
</div>
</div>

<!-- overlays -->
<div class="abs" style="left:306px;top:151px;width:525px;height:30px;background:rgba(72,72,72,.48);border-radius:3px"></div>
<div class="abs" style="left:313px;top:157px;font-size:14.400px;line-height:19px;color:#fff;white-space:nowrap;letter-spacing:-.28px">Оставшееся время конференции: 05:28 | Перейти на профессиональный план</div>
<div class="abs" style="left:1009px;top:150px;width:119px;height:30px;background:rgba(72,72,72,.48);border-radius:3px"></div>
<svg class="abs" style="left:1021px;top:158px" width="13" height="13" viewBox="0 0 13 13" fill="none" stroke="#f0f0f0" stroke-width="1.100" stroke-linecap="round"><circle cx="6.500" cy="6.500" r="5.500"/><path d="M6.500 3.500v3.200l2 1"/></svg>
<div class="abs" style="left:1042px;top:156px;font-size:14.500px;line-height:19px;color:#fff;white-space:nowrap;letter-spacing:-.2px">00:34:43</div>
<svg class="abs" style="left:1111px;top:162px" width="9" height="6" viewBox="0 0 9 6"><path d="M.5 .5h8L4.500 5.500z" fill="#fff"/></svg>
<!-- titlebar -->
<div id="titlebar" class="abs"><div class="abs" style="left:1px;top:4px;width:20px;height:19px;border-radius:7px;background:linear-gradient(180deg,#2a7bff,#0b50e8);color:#fff;font-weight:bold;font-size:9px;line-height:18px;text-align:center;letter-spacing:-.3px">zm</div><div class="abs t">Zoom Конференция</div>
<svg class="abs" style="left:1370px;top:7px" width="130" height="14" viewBox="0 0 130 14" fill="none" stroke="#8a8a8a" stroke-width="1"><path d="M1.500 6h11" stroke="#c2c2c2"/><rect x="56.500" y="3.500" width="8" height="8" rx="1.500"/><path d="M58.500 3.500v-1a1.500 1.500 0 0 1 1.500-1.500h5a1.500 1.500 0 0 1 1.500 1.500v5a1.500 1.500 0 0 1-1.500 1.500h-.5"/><path d="M111.500 1l11 11M122.500 1l-11 11" stroke="#6a6a6a" stroke-width="1.100"/></svg>
</div>
<div class="abs" style="left:715px;top:-2px;width:89px;height:66px;background:#000;border:1px solid #8c8c8c;border-radius:0 0 4px 4px"><svg class="abs" style="left:22px;top:1px" width="38" height="38" viewBox="-19 -19 38 38"><circle r="18.200" fill="#fff"/><g fill="none" stroke="#000" stroke-width="3.200"><path d="M-2.500 -19L-12 7"/><path d="M-9.500 0c2-5.500 7.500-6.500 6.500-2L-6 7"/><path d="M6 -7.500L-3 19"/><path d="M4 -7c8-2 10 1 8.500 5L10 5c-1 2.500-4 3-8 2.500"/></g></svg></div>

<!-- chat -->
<div id="chat" class="abs"><div class="abs" style="left:1px;top:0;width:378px;height:769px">
<div class="abs hd">Чат конференции</div>
<svg class="abs" style="left:317px;top:17px" width="18" height="18" viewBox="0 0 18 18" fill="none" stroke="#666b7a" stroke-width="2.1" stroke-linecap="round" stroke-linejoin="round"><path d="M9 2.5H5.5a3 3 0 0 0-3 3v7a3 3 0 0 0 3 3h7a3 3 0 0 0 3-3V10"/><path d="M11 2h5v5"/><path d="M16 2L8.5 9.5"/></svg>
<svg class="abs" style="left:351px;top:20px" width="13" height="13" viewBox="0 0 13 13" fill="none" stroke="#5a5a6e" stroke-width="1.6" stroke-linecap="round"><path d="M1 1L12 12M12 1L1 12"/></svg>

<div class="abs mh" style="top:62px">Вы кому <b>Все</b> <i>16:42</i></div>
<div class="abs av" style="top:79px;background:#d9743f;overflow:hidden;border-radius:10px"><svg class="abs" style="left:0;top:0" width="24" height="24" viewBox="0 0 24 24"><rect width="24" height="24" fill="#d8733f"/><path d="M0 0h15L0 9z" fill="#a99a82"/><path d="M0 8L14 0h4L0 10.500z" fill="#2a2624"/><ellipse cx="15.500" cy="10" rx="7.200" ry="10" fill="#2b1c17"/><path d="M8 8c-1 3-1 7 1 10l3-6z" fill="#2b1c17"/><ellipse cx="13.800" cy="9.300" rx="4.500" ry="5.700" fill="#edd3c6"/><path d="M11.500 13.500l4 .5-.5 3-4-1z" fill="#e3bfae"/><ellipse cx="13.500" cy="12" rx="1.200" ry=".6" fill="#c9727a"/><path d="M1.500 18C3 14 6 11.500 8.500 11.500c2 2.500 5 4 8.500 4 1.500 2 2.500 5 2 9H2z" fill="#e60a0a"/><path d="M4.500 16l1.500 7" stroke="#7a4a20" stroke-width="1" fill="none" opacity=".7"/></svg></div>
<div class="abs bb" style="top:78px;width:141px;height:38px;background:#dfefff"><u>https://padlet.com</u></div>

<div class="abs mh" style="top:126px"><b style="color:#2d73e0">Parmacli Marina</b> кому <b>Все</b> <i>17:04</i></div>
<div class="abs av" style="top:142px;background:#c2390f">P</div>
<div class="abs bb" style="top:142px;width:284px;height:57px;font-size:14px;letter-spacing:-0.1px">У меня требуются дополнительные<br>настройки</div>

<div class="abs mh" style="top:210px"><b style="color:#2d73e0">Шаган Анастасия</b> кому <b>Все</b> <i>17:05</i></div>
<div class="abs av" style="top:226px;background:#d4550c">Ш</div>
<div class="abs bb" style="top:226px;width:284px;height:57px"><u>https://padlet.com/shagan301297/i-</u><br><u>tsavabkcpr3iiees</u></div>

<div class="abs mh" style="top:294px"><b style="color:#2d73e0">Шаган Анастасия</b> кому <b>Все</b> <i>17:14</i></div>
<div class="abs av" style="top:310px;background:#d4550c">Ш</div>
<div class="abs bb" style="top:310px;width:284px;height:57px"><u>https://www.youtube.com/watch?v=</u><br><u>5BfT4WaVVfE</u></div>

<svg class="abs" style="left:47px;top:374px" width="62" height="16" viewBox="0 0 62 16" fill="none" stroke="#6e6e82" stroke-width="1.4" stroke-linecap="round" stroke-linejoin="round"><path d="M9 3H6a4 4 0 0 0-3.2 6.4c.6.8 1.2 1.4 1.2 3.1 1-.9 1.700-1.500 3-1.500h4a3.500 3.500 0 0 0 3.400-3"/><path d="M12.500 1.200v4M10.500 3.200h4"/><circle cx="30.500" cy="8.500" r="6" stroke-dasharray="30 8" stroke-dashoffset="-4"/><path d="M28.300 7v1M32.500 7v1M27.800 10.500c1.500 1.800 4 1.800 5.400 0"/><path d="M36 1v4M34 3h4"/><circle cx="49" cy="8.700" r=".6" fill="#6e6e82"/><circle cx="53.500" cy="8.700" r=".6" fill="#6e6e82"/><circle cx="58" cy="8.700" r=".6" fill="#6e6e82"/></svg>

<div class="abs" style="left:-1px;top:599px;width:379px;height:28px;background:#f7f7fa;border-top:1px solid #ededf2;border-bottom:1px solid #ededf2"></div>
<svg class="abs" style="left:61px;top:604px" width="18" height="18" viewBox="0 0 18 18" fill="none" stroke="#5a5a6e" stroke-width="1.400" stroke-linecap="round"><circle cx="7" cy="4.500" r="3"/><path d="M1.500 15.500v-1a4.500 4.500 0 0 1 4.500-4.500h2"/><path d="M13 8.500l4 1.200v3c0 2-1.600 3.600-4 4.300-2.400-.7-4-2.300-4-4.300v-3z" fill="#0e71eb" stroke="none"/></svg>
<div class="abs" style="left:83px;top:606px;font-size:13.9px;line-height:18px;color:#555566;white-space:nowrap">Кто может видеть ваши сообщения?</div>

<div class="abs" style="left:13px;top:643px;font-size:14.1px;line-height:20px;color:#333344">Кому:</div>
<div class="abs" style="left:59px;top:640px;width:71px;height:27px;border-radius:7px;background:#0e71eb;color:#fff;font-size:12.5px;line-height:27px;padding-left:17px">Все<svg class="abs" style="left:52px;top:10px" width="10" height="8" viewBox="0 0 10 8" fill="none" stroke="#fff" stroke-width="1.800" stroke-linecap="round" stroke-linejoin="round"><path d="M1.500 2L5 5.500 8.500 2"/></svg></div>
<div class="abs" style="left:20px;top:680px;font-size:11.8px;line-height:16px;color:#7a7a88;white-space:nowrap">Введите здесь сообщение...</div>

<svg class="abs" style="left:18px;top:737px" width="216" height="22" viewBox="0 0 216 22" fill="none" stroke="#7a7a8c" stroke-width="1.400" stroke-linecap="round" stroke-linejoin="round"><path d="M2 6.500h8M6 6.500V12"/><path d="M8 17.500l1-3.500 7-7 2.300 2.300-7 7z"/><circle cx="52" cy="11" r="7.500"/><path d="M49.500 9v1.200M54.500 9v1.200M48.500 13c1.800 2.200 5.200 2.200 7 0"/><path d="M89 3.500h6.500l5 5V17a2 2 0 0 1-2 2H89a2 2 0 0 1-2-2V5.500a2 2 0 0 1 2-2z"/><path d="M95.500 3.500v5h5"/><path d="M143 12V7a3 3 0 0 0-3-3h-8a3 3 0 0 0-3 3v8a3 3 0 0 0 3 3h5"/><path d="M141.500 14.500v5M139 17h5"/><path d="M167 9.500l3.500 3.500 3.500-3.500"/><circle cx="199" cy="11" r=".8" fill="#6e6e82"/><circle cx="203.500" cy="11" r=".8" fill="#6e6e82"/><circle cx="208" cy="11" r=".8" fill="#6e6e82"/></svg>
<div class="abs" style="left:339px;top:734px;width:28px;height:28px;border-radius:7px;background:#f0f0f4"><svg class="abs" style="left:5px;top:6px" width="18" height="16" viewBox="0 0 18 16"><path d="M1 2.500L17 1.500 8 14.500 7.500 8z" fill="#7a7a88"/><path d="M7.500 8L17 1.500" stroke="#f0f0f4" stroke-width="1.200"/></svg></div>
</div></div>

<!-- taskbar -->
<div id="taskbar" class="abs">
<!-- weather -->
<svg class="abs" style="left:22px;top:18px" width="32" height="22" viewBox="0 0 32 22"><defs><linearGradient id="cl" x1="0" y1="0" x2="0" y2="1"><stop offset="0" stop-color="#ffffff"/><stop offset=".6" stop-color="#e6eefb"/><stop offset="1" stop-color="#8fb4ee"/></linearGradient></defs><path d="M7.500 19.500a5.500 5.500 0 0 1-.8-10.900 7.500 7.500 0 0 1 14.300-1.300 6.200 6.200 0 0 1 3.800 12.200z" fill="url(#cl)"/></svg>
<div class="abs tbt" style="left:61px;top:11px">8°C</div>
<div class="abs tbt" style="left:61px;top:30px;color:#cfd3d8">Cloudy</div>
<!-- cursor -->
<svg class="abs" style="left:313px;top:35px" width="21" height="28" viewBox="0 0 18 24"><path d="M2 1.500L2 19 6.300 15.200 9.500 22.500 12.500 21.200 9.300 14 15 13.600z" fill="#c9441a" stroke="#7a2a10" stroke-width=".8"/></svg>
<!-- windows -->
<svg class="abs" style="left:454px;top:15px" width="29" height="29" viewBox="0 0 29 29"><defs><linearGradient id="wg" x1="0" y1="0" x2="1" y2="1"><stop offset="0" stop-color="#6fd3fa"/><stop offset="1" stop-color="#0b8fe6"/></linearGradient></defs><path d="M0 1.500a1.500 1.500 0 0 1 1.500-1.500H13.700V13.700H0zM15.300 0H27.500a1.500 1.500 0 0 1 1.500 1.500V13.700H15.300zM0 15.300H13.700V29H1.500a1.500 1.500 0 0 1-1.500-1.500zM15.300 15.300H29V27.500a1.500 1.500 0 0 1-1.500 1.500H15.300z" fill="url(#wg)"/></svg>
<!-- search -->
<div class="abs" style="left:498px;top:10px;width:260px;height:38px;border-radius:19px;background:#2c3d50;border:1px solid #364757;overflow:hidden">
<svg class="abs" style="left:13px;top:9px" width="20" height="20" viewBox="0 0 20 20" fill="none" stroke="#e6e6e6" stroke-width="2" stroke-linecap="round"><circle cx="11.500" cy="8" r="5.700"/><path d="M7.300 12.300L2.500 17.500"/></svg>
<div class="abs" style="left:44px;top:9.500px;font-size:17px;line-height:20px;color:#e2e2e2">Поиск</div>
<svg class="abs" style="left:191px;top:1px" width="70" height="36" viewBox="0 0 70 36"><path d="M0 36C14 30 30 24 44 21 56 18 64 17 70 18V36z" fill="#e9e6ee"/><path d="M46 2L26 24M60 2L40 22" stroke="#6b5a55" stroke-width=".7"/><path d="M11 12l-5 8h3l-5 7h14l-5-7h3z" fill="#2f8a5e"/><path d="M60 10l-3.500 6h2l-3.500 6h10l-3.500-6h2z" fill="#2f8a5e"/><path d="M8 21l3 1 3-1M57 17l3 1 3-1" stroke="#fff" stroke-width="1.500" fill="none"/><path d="M22 20l7-10 7 10v13H22z" fill="#f0c987"/><path d="M20.500 21L29 8.500 37.500 21" fill="none" stroke="#c0452a" stroke-width="2.200"/><rect x="27" y="26" width="4" height="7" fill="#7b4a2a"/><circle cx="29" cy="19" r="2" fill="#fff" stroke="#7b4a2a" stroke-width=".6"/><rect x="46" y="6" width="12" height="9" rx="1.500" fill="#d4402c"/><rect x="47.500" y="7.500" width="9" height="3" fill="#f4b7a6"/><path d="M39 24l9-5 10 5v9H39z" fill="#c98a3c"/><path d="M37 25l11-6.500 12 6.500" fill="none" stroke="#7d5a2a" stroke-width="2"/><rect x="41" y="26" width="15" height="3" fill="#8a5a22"/></svg>
</div>
<!-- chat app -->
<svg class="abs" style="left:772px;top:14px" width="30" height="30" viewBox="0 0 30 30"><defs><linearGradient id="pc" x1="0" y1="0" x2="1" y2="1"><stop offset="0" stop-color="#9a8fe8"/><stop offset="1" stop-color="#6e5ed0"/></linearGradient></defs><path d="M15 1.500a13.500 13.500 0 1 1-6.500 25.300L2 29l2-6A13.500 13.500 0 0 1 15 1.500z" fill="url(#pc)"/><rect x="7" y="10" width="11.500" height="9.500" rx="2" fill="#fff"/><path d="M19.500 14l4-2.800v7.600l-4-2.800z" fill="#fff"/></svg>
<!-- chrome -->
<svg class="abs" style="left:825px;top:14px" width="30" height="30" viewBox="-15 -15 30 30"><circle r="14.500" fill="#fff"/><path d="M0 0L-12.560 -7.250A14.500 14.500 0 0 1 12.560 -7.250z" fill="#ea4335"/><path d="M0 0L12.560 -7.250A14.500 14.500 0 0 1 0 14.500z" fill="#fbbc04"/><path d="M0 0L0 14.500A14.500 14.500 0 0 1 -12.560 -7.250z" fill="#34a853"/><path d="M0 -7.250H12.560A14.500 14.500 0 0 0 -12.560 -7.250L-6.280 3.620z" fill="#ea4335"/><path d="M6.280 3.620L0 14.500A14.500 14.500 0 0 0 12.560 -7.250H0z" fill="#fbbc04"/><path d="M-6.280 3.620L-12.560 -7.250A14.500 14.500 0 0 0 0 14.500L6.280 3.620z" fill="#34a853"/><circle r="7" fill="#fff"/><circle r="5.500" fill="#4285f4"/></svg>
<div class="abs ind" style="left:837px"></div>
<!-- word -->
<svg class="abs" style="left:878px;top:16px" width="28" height="27" viewBox="0 0 28 27"><rect x="11" y="2.500" width="15.500" height="21.500" rx="1" fill="#fff" stroke="#2b5fb4" stroke-width="1"/><path d="M15 6.500h9M15 9.500h9M15 12.500h9M15 15.500h9M15 18.500h9M15 21h9" stroke="#2b5fb4" stroke-width="1.300"/><path d="M1 3L14.500 .5V26.500L1 24z" fill="#2b5fb4"/><text x="7.700" y="18" font-family="Liberation Sans" font-weight="bold" font-size="11" fill="#fff" text-anchor="middle">W</text></svg>
<div class="abs ind" style="left:889px"></div>
<!-- zoom -->
<div class="abs" style="left:929px;top:14px;width:29px;height:29px;border-radius:50%;background:#0b5cff;color:#fff;font-size:8.500px;font-weight:bold;line-height:28px;text-align:center;letter-spacing:-.2px">zoom</div>
<div class="abs ind" style="left:941px"></div>
<!-- acrobat -->
<div class="abs" style="left:982px;top:16px;width:27px;height:25px;border-radius:5px;background:#b30b00"><svg class="abs" style="left:5px;top:4px" width="17" height="17" viewBox="0 0 17 17" fill="none" stroke="#fff" stroke-width="1.500" stroke-linejoin="round"><path d="M1.500 14.500c2-4 5-2 6.500-11 .3-2.500 1.700-2.500 1.500 0-.5 4 3 7.500 6 7.500 1.500-.2 1-1.800-.8-1.600-4 .2-8.500 1.800-11.700 4.300-1.200 1-2 1.600-1.500.8z"/></svg></div>
<div class="abs ind" style="left:993px"></div>
<!-- green G -->
<div class="abs" style="left:1033px;top:16px;width:29px;height:29px;background:#3b3b3b"><svg class="abs" style="left:0;top:0" width="29" height="29" viewBox="0 0 29 29" fill="#8be000"><g><circle cx="5" cy="8" r="1.500"/><circle cx="8" cy="6" r="1.500"/><circle cx="11" cy="7" r="1.500"/><circle cx="14" cy="9" r="1.500"/><circle cx="17" cy="10" r="1.500"/><circle cx="20" cy="11" r="1.500"/><circle cx="23" cy="12.500" r="1.500"/><circle cx="4" cy="11" r="1.500"/><circle cx="3.500" cy="14" r="1.500"/><circle cx="3" cy="17" r="1.500"/><circle cx="2.500" cy="20" r="1.500"/><circle cx="2.500" cy="23" r="1.500"/><circle cx="3" cy="26" r="1.500"/><circle cx="6" cy="27" r="1.500"/><circle cx="9" cy="27.500" r="1.500"/><circle cx="12" cy="27.500" r="1.500"/><circle cx="15" cy="27" r="1.500"/><circle cx="18" cy="27.500" r="1.500"/><circle cx="21" cy="27" r="1.500"/><circle cx="22" cy="24" r="1.500"/><circle cx="19" cy="23" r="1.500"/><circle cx="16" cy="22.500" r="1.500"/><circle cx="13" cy="20" r="1.500"/><circle cx="7" cy="9.500" r="1.500"/></g></svg></div>
<div class="abs ind" style="left:1045px"></div>
<!-- tray -->
<svg class="abs" style="left:1113px;top:23px" width="16" height="10" viewBox="0 0 16 10" fill="none" stroke="#e8e8e8" stroke-width="1.400" stroke-linecap="round" stroke-linejoin="round"><path d="M1.500 8.500L8 2l6.500 6.500"/></svg>
<svg class="abs" style="left:1138px;top:17px" width="22" height="23" viewBox="0 0 22 23" fill="none" stroke="#e8e8e8" stroke-width="1.400" stroke-linecap="round" stroke-linejoin="round"><path d="M2.500 10A8 8 0 0 1 17 6.500"/><path d="M17.500 2v5h-5"/><path d="M18.500 12A8 8 0 0 1 4 15.500"/><path d="M3.500 20v-5h5"/><circle cx="16.500" cy="17.500" r="4" fill="#f08a1c" stroke="none"/></svg>
<svg class="abs" style="left:1172px;top:21px" width="20" height="15" viewBox="0 0 20 15" fill="none" stroke="#e8e8e8" stroke-width="1.300" stroke-linecap="round"><rect x=".8" y=".8" width="18.400" height="13.400" rx="2.500"/><path d="M4 5h.5M7 5h.5M10 5h.5M13 5h.5M16 5h.5M4 8h.5M7 8h.5M10 8h.5M13 8h.5M16 8h.5M6 11h8"/></svg>
<svg class="abs" style="left:1212px;top:17px" width="16" height="24" viewBox="0 0 16 24" fill="none" stroke="#9ad8e6" stroke-width="1.500" stroke-linecap="round"><rect x="5" y="1.500" width="6" height="12" rx="3"/><path d="M2 11a6 6 0 0 0 12 0M8 17v4"/></svg>
<div class="abs tbt" style="left:1240px;top:11px;width:50px;text-align:center;font-size:14px">ENG</div>
<div class="abs tbt" style="left:1240px;top:30px;width:50px;text-align:center;font-size:14px">INTL</div>
<svg class="abs" style="left:1299px;top:19px" width="22" height="18" viewBox="0 0 22 18" fill="none" stroke="#f0f0f0" stroke-width="1.700" stroke-linecap="round"><path d="M1.500 7A13.500 13.500 0 0 1 20.500 7"/><path d="M4.500 10.500A9 9 0 0 1 17.500 10.500"/><path d="M7.700 13.700A4.600 4.600 0 0 1 14.300 13.700"/><circle cx="11" cy="16" r="1.100" fill="#f0f0f0" stroke="none"/></svg>
<svg class="abs" style="left:1327px;top:19px" width="22" height="18" viewBox="0 0 22 18" fill="none" stroke="#f0f0f0" stroke-width="1.400" stroke-linecap="round" stroke-linejoin="round"><path d="M1.500 6.500h3.500l4.500-4v13l-4.500-4H1.500z"/><path d="M12.500 6a4 4 0 0 1 0 6M15 3.500a7.500 7.500 0 0 1 0 11M17.700 1.500a10.500 10.500 0 0 1 0 15"/></svg>
<svg class="abs" style="left:1355px;top:20px" width="24" height="16" viewBox="0 0 24 16" fill="none" stroke="#f0f0f0" stroke-width="1.400" stroke-linecap="round" stroke-linejoin="round"><rect x="6" y="2.500" width="14.500" height="11" rx="2"/><path d="M22.500 6v4"/><rect x="8" y="4.500" width="8" height="7" fill="#f0f0f0" stroke="none"/><path d="M1 5.500h5.500v5H3.500a2.500 2.500 0 0 1-2.500-2.500zM2.500 5.500V3M5 5.500V3" fill="#f0f0f0"/></svg>
<div class="abs tbt" style="left:1380px;top:11px;width:81px;text-align:right;letter-spacing:-.3px">17:16</div>
<div class="abs tbt" style="left:1380px;top:30px;width:81px;text-align:right;letter-spacing:-.3px">20.12.2023</div>
<div class="abs" style="left:1474px;top:20px;width:18px;height:18px;border-radius:50%;background:#94c7dd;color:#14263a;font-size:12px;line-height:18px;text-align:center">1</div>
</div>

</div>
</body></html>
